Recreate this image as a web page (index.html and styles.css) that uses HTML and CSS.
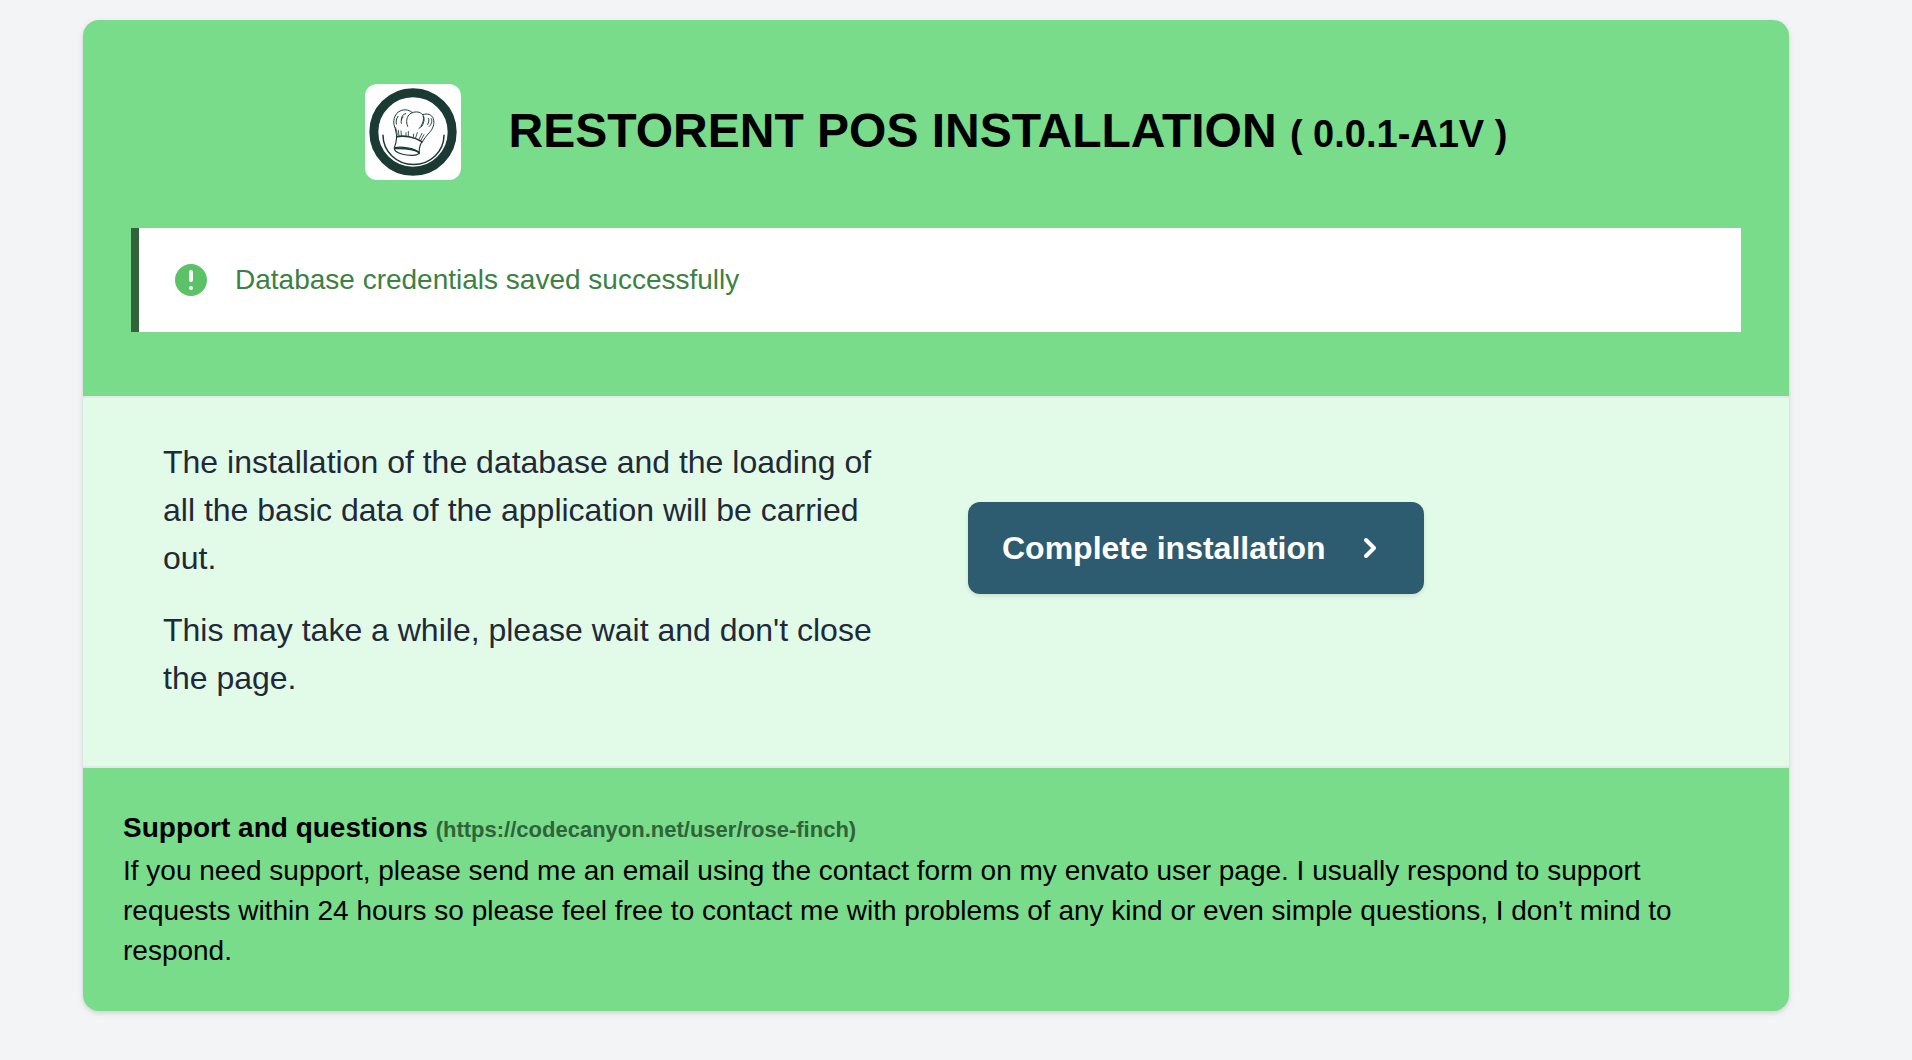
FILE: index.html
```html
<!DOCTYPE html>
<html lang="en">
<head>
<meta charset="utf-8">
<title>Restorent POS Installation</title>
<meta name="viewport" content="width=device-width, initial-scale=1">
<link rel="stylesheet" href="styles.css">
</head>
<body>
<main class="card">
  <header class="card-header">
    <div class="brand">
      <svg class="brand-logo" viewBox="39 42 288 288" role="img" aria-label="Restorent POS logo">
        <rect x="39" y="42" width="288" height="288" fill="#fff"/>
        <g fill="none" stroke="#1b3a34" stroke-linecap="round" stroke-linejoin="round">
          <circle cx="183" cy="186" r="117.500" stroke-width="27"/>
          <path stroke-width="4.500" d="M93 196a91 87 0 0 0 183 0"/>
          <path stroke-width="3" d="M134 199c-2-12-3-20-7-31-4-14-1-32 12-42 13-9 30-9 42 2 11-4 23-3 31 6 14-5 28 0 32 12 5 16-2 31-12 42-9 10-16 18-22 30"/>
          <path stroke-width="3.500" d="M134 199c-1 12-1 22-7 34M208 218c-5 9-7 21-6 33"/>
          <path stroke-width="5" d="M134 200c21-4 53 0 75 15"/>
          <path stroke-width="3.500" d="M127 234c16-5 62-2 74 14-1 11-34 9-52 4-14-4-23-11-22-18z"/>
          <path stroke-width="5" d="M129 235c20 1 50-1 70 11"/>
          <path stroke-width="3" d="M181 128c-12 4-17 15-17 27 0 6 1 10 3 14M161 131c-10 2-12 10-13 18M212 134c7 8 5 22-2 34l-9 7M214 139c2 10-1 20-7 29M229 145c4 4 1 13-2 18M238 146c4 8 0 17-6 23M138 139c-5 7-7 15-5 23M153 141c-5 6-7 12-5 19"/>
          <path stroke-width="2.500" d="M139 181l2 17M147 183l1 14M162 188v9M169 184v14M185 192l-1 10M196 188l-5 15M210 190l-9 18M216 194l-10 18M131 173l5 20"/>
        </g>
      </svg>
      <h1 class="brand-title">RESTORENT POS INSTALLATION <small class="brand-version">( 0.0.1-A1V )</small></h1>
    </div>
    <div class="alert" role="status">
      <svg class="icon alert-icon" viewBox="0 0 20 20" fill="currentColor" aria-hidden="true">
        <path fill-rule="evenodd" clip-rule="evenodd" d="M18 10a8 8 0 1 1-16 0 8 8 0 0 1 16 0zM10 5a1 1 0 0 0-1 1v4a1 1 0 1 0 2 0V6a1 1 0 0 0-1-1zm0 8a1 1 0 1 0 0 2 1 1 0 0 0 0-2z"/>
      </svg>
      <p class="alert-text">Database credentials saved successfully</p>
    </div>
  </header>

  <section class="card-body">
    <div class="intro">
      <p>The installation of the database and the loading of all the basic data of the application will be carried out.</p>
      <p>This may take a while, please wait and don't close the page.</p>
    </div>
    <div class="action">
      <button class="button" type="button">
        <span>Complete installation</span>
        <svg class="icon" viewBox="0 0 20 20" fill="currentColor" aria-hidden="true">
          <path fill-rule="evenodd" clip-rule="evenodd" d="M7.293 14.707a1 1 0 0 1 0-1.414L10.586 10 7.293 6.707a1 1 0 0 1 1.414-1.414l4 4a1 1 0 0 1 0 1.414l-4 4a1 1 0 0 1-1.414 0z"/>
        </svg>
      </button>
    </div>
  </section>

  <footer class="card-footer">
    <h2 class="support-title">Support and questions <a class="support-link" href="https://codecanyon.net/user/rose-finch">(https://codecanyon.net/user/rose-finch)</a></h2>
    <p class="support-text">If you need support, please send me an email using the contact form on my envato user page. I usually respond to support requests within 24 hours so please feel free to contact me with problems of any kind or even simple questions, I don’t mind to respond.</p>
  </footer>
</main>
</body>
</html>
```
FILE: styles.css
```css
*,
*::before,
*::after {
  box-sizing: border-box;
}

body {
  margin: 0;
  padding: 20px 123px 48px 83px;
  background: #f3f4f6;
  color: #000;
  font-family: "Liberation Sans", Helvetica, Arial, sans-serif;
  font-size: 28px;
  line-height: 40px;
}

h1,
h2,
p {
  margin: 0;
}

.card {
  overflow: hidden;
  border-radius: 16px;
  background: #79dc8a;
  box-shadow: 0 2px 6px rgba(0, 0, 0, 0.1), 0 2px 4px rgba(0, 0, 0, 0.06);
}

.card-header {
  padding: 64px 48px;
}

.brand {
  display: flex;
  align-items: center;
  justify-content: center;
  gap: 48px;
  margin-bottom: 48px;
}

.brand-logo {
  flex: none;
  width: 96px;
  height: 96px;
  border-radius: 12px;
}

.brand-title {
  font-size: 48px;
  line-height: 60px;
}

.brand-version {
  font-size: 38px;
}

.icon {
  flex: none;
  width: 40px;
  height: 40px;
}

.alert {
  display: flex;
  align-items: center;
  gap: 24px;
  padding: 32px;
  border-left: 8px solid #30633a;
  background: #fff;
}

.alert-icon {
  color: #5cc268;
}

.alert-text {
  color: #3b8144;
}

.card-body {
  display: grid;
  grid-template-columns: 1fr 1fr;
  gap: 64px;
  padding: 40px 80px 64px;
  border-top: 2px solid #e5e7eb;
  border-bottom: 2px solid #e5e7eb;
  background: #e1fbe8;
}

.intro {
  display: grid;
  gap: 24px;
  color: #1f2937;
  font-size: 32px;
  line-height: 48px;
}

.action {
  padding-top: 64px;
}

.button {
  display: inline-flex;
  align-items: center;
  gap: 24px;
  padding: 20px 32px;
  border: 2px solid transparent;
  border-radius: 12px;
  background: #2d5c71;
  box-shadow: 0 2px 4px rgba(0, 0, 0, 0.1);
  color: #fff;
  font: bold 32px/48px "Liberation Sans", Helvetica, Arial, sans-serif;
  cursor: pointer;
}

.card-footer {
  padding: 40px;
}

.support-title {
  margin-bottom: 3px;
  font-size: 28px;
  line-height: 40px;
}

.support-link {
  color: #30633a;
  font-size: 22px;
  line-height: 22px;
  text-decoration: none;
}
```
